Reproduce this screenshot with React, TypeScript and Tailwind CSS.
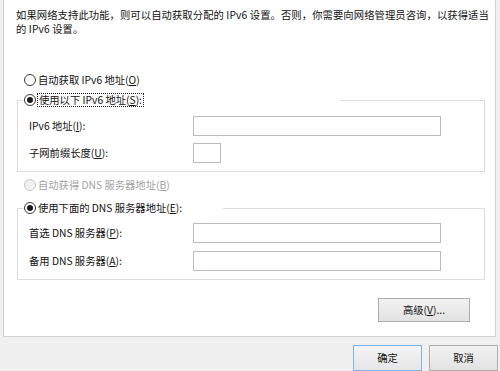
import React from 'react';

const font = { fontFamily: '"Microsoft YaHei", "Noto Sans CJK SC", sans-serif' };

interface RadioProps {
  checked?: boolean;
  disabled?: boolean;
}

const Radio: React.FC<RadioProps> = ({ checked, disabled }) => (
  <span
    className={`flex h-[12px] w-[12px] shrink-0 items-center justify-center rounded-full border ${
      disabled ? 'border-[#c8c8c8] bg-[#f0f0f0]' : 'border-[#3a3a3a] bg-white'
    }`}
  >
    {checked && <span className="h-[6px] w-[6px] rounded-full bg-[#1a1a1a]" />}
  </span>
);

const Field: React.FC<{ label: React.ReactNode; inputWidth: string; className?: string }> = ({
  label,
  inputWidth,
  className = '',
}) => (
  <div className={`flex h-[20px] items-center pl-[6px] ${className}`}>
    <span className="w-[164px] text-[10.3px] leading-[14px] text-[#111]">{label}</span>
    <div className={`h-[20px] ${inputWidth} border border-[#b9bdc3] bg-white`} />
  </div>
);

const App: React.FC = () => {
  return (
    <div className="h-[371px] w-[500px] overflow-hidden bg-[#f0f0f0] text-[#111]" style={font}>
      {/* Property page */}
      <div className="ml-[3px] h-[337px] w-[493px] border-x border-b border-[#d2d2d2] bg-white">
        <p className="whitespace-nowrap pl-[12px] pt-[8px] text-[10.3px] leading-[14px] tracking-[0.1px]">
          如果网络支持此功能，则可以自动获取分配的 IPv6 设置。否则，你需要向网络管理员咨询，以获得适当
          <br />
          的 IPv6 设置。
        </p>

        <div className="ml-[20px] mt-[37px] flex h-[14px] items-center gap-[2px] text-[10.3px] leading-[14px]">
          <Radio />
          <span>
            自动获取 IPv6 地址(<u>O</u>)
          </span>
        </div>

        {/* Static address group */}
        <fieldset className="ml-[13px] mt-[6px] w-[468px] border border-[#dcdcdc] pb-[8px] pl-[5px]">
          <legend className="w-[317px]">
            <div className="flex h-[14px] items-center gap-[1px] pl-px text-[10.3px] leading-[14px]">
              <Radio checked />
              <span className="border border-dotted border-[#222] px-px leading-[12px]">
                使用以下 IPv6 地址(<u>S</u>):
              </span>
            </div>
          </legend>
          <Field className="mt-[9px]" label={<>IPv6 地址(<u>I</u>):</>} inputWidth="w-[248px]" />
          <Field className="mt-[7px]" label={<>子网前缀长度(<u>U</u>):</>} inputWidth="w-[28px]" />
        </fieldset>

        <div className="ml-[20px] mt-[6px] flex h-[14px] items-center gap-[2px] text-[10.3px] leading-[14px] text-[#a3a3a3]">
          <Radio disabled />
          <span>
            自动获得 DNS 服务器地址(<u>B</u>)
          </span>
        </div>

        {/* DNS group */}
        <fieldset className="ml-[13px] mt-[9px] w-[468px] border border-[#dcdcdc] pb-[8px] pl-[5px]">
          <legend className="w-[200px]">
            <div className="flex h-[14px] items-center gap-[2px] pl-px text-[10.3px] leading-[14px]">
              <Radio checked />
              <span>
                使用下面的 DNS 服务器地址(<u>E</u>):
              </span>
            </div>
          </legend>
          <Field className="mt-[8px]" label={<>首选 DNS 服务器(<u>P</u>):</>} inputWidth="w-[248px]" />
          <Field className="mt-[8px]" label={<>备用 DNS 服务器(<u>A</u>):</>} inputWidth="w-[248px]" />
        </fieldset>

        <div className="mr-[25px] mt-[18px] flex justify-end">
          <button className="flex h-[24px] w-[92px] items-center justify-center border border-[#acacac] bg-gradient-to-b from-[#f2f2f2] to-[#e2e2e2] text-[10.3px] leading-[14px]">
            高级(<u>V</u>)...
          </button>
        </div>
      </div>

      {/* Dialog buttons */}
      <div className="mt-[8px] flex justify-end gap-[7px] pr-[2px]">
        <button className="flex h-[26px] w-[69px] items-center justify-center border border-[#7eb4ea] bg-gradient-to-b from-[#f4f4f4] to-[#e6e6e6] text-[10.3px] leading-[14px]">
          确定
        </button>
        <button className="flex h-[26px] w-[69px] items-center justify-center border border-[#acacac] bg-gradient-to-b from-[#f2f2f2] to-[#e2e2e2] text-[10.3px] leading-[14px]">
          取消
        </button>
      </div>
    </div>
  );
};

export default App;
